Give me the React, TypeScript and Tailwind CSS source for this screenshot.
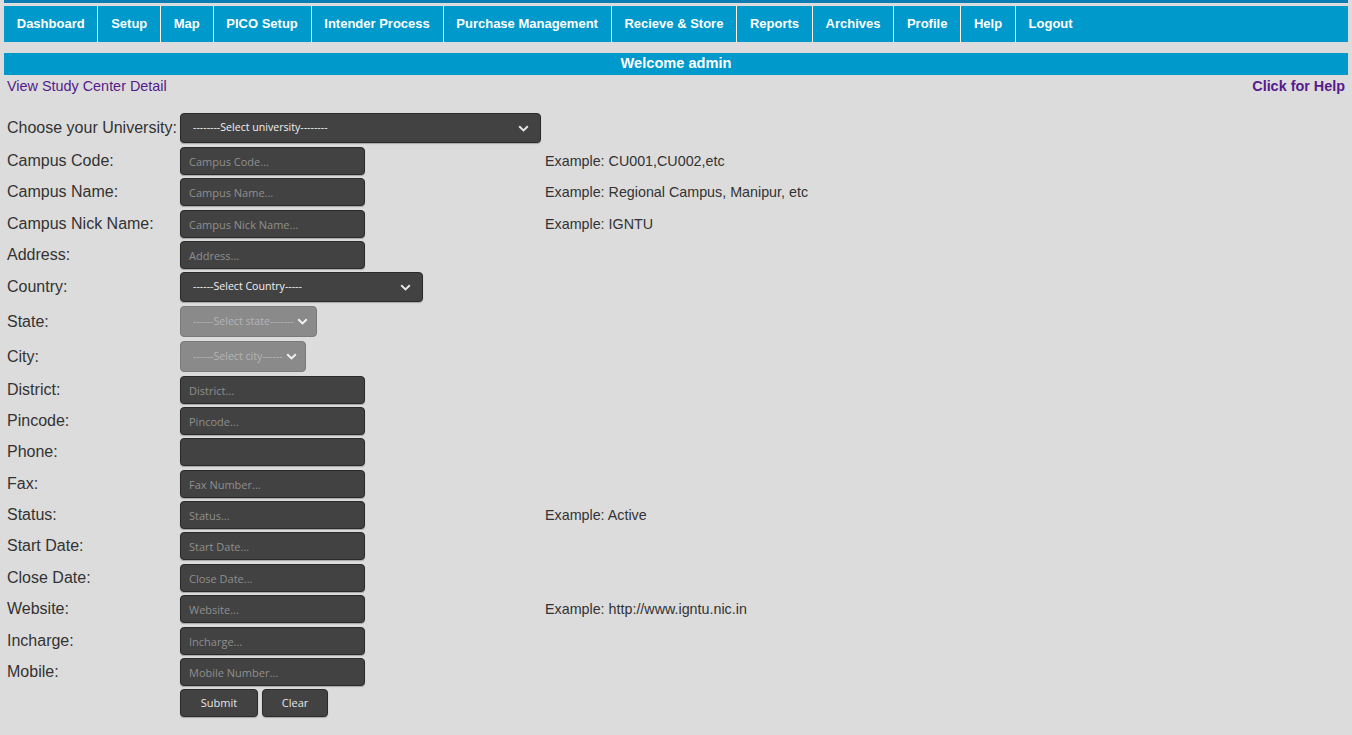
import type { ReactNode } from 'react';

const navItems = [
  'Dashboard',
  'Setup',
  'Map',
  'PICO Setup',
  'Intender Process',
  'Purchase Management',
  'Recieve & Store',
  'Reports',
  'Archives',
  'Profile',
  'Help',
  'Logout',
];

type Field =
  | { kind: 'input'; label: string; placeholder: string; mt: string; example?: string }
  | { kind: 'select'; label: string; text: string; mt: string; width: string; height: string; disabled?: boolean };

const fields: Field[] = [
  { kind: 'select', label: 'Choose your University:', text: '--------Select university--------', mt: 'mt-0', width: 'w-[361px]', height: 'h-[30px]' },
  { kind: 'input', label: 'Campus Code:', placeholder: 'Campus Code...', mt: 'mt-[4px]', example: 'Example: CU001,CU002,etc' },
  { kind: 'input', label: 'Campus Name:', placeholder: 'Campus Name...', mt: 'mt-[3px]', example: 'Example: Regional Campus, Manipur, etc' },
  { kind: 'input', label: 'Campus Nick Name:', placeholder: 'Campus Nick Name...', mt: 'mt-[4px]', example: 'Example: IGNTU' },
  { kind: 'input', label: 'Address:', placeholder: 'Address...', mt: 'mt-[3px]' },
  { kind: 'select', label: 'Country:', text: '------Select Country-----', mt: 'mt-[3px]', width: 'w-[243px]', height: 'h-[30px]' },
  { kind: 'select', label: 'State:', text: '------Select state-------', mt: 'mt-[4px]', width: 'w-[137px]', height: 'h-[31px]', disabled: true },
  { kind: 'select', label: 'City:', text: '------Select city------', mt: 'mt-[4px]', width: 'w-[126px]', height: 'h-[31px]', disabled: true },
  { kind: 'input', label: 'District:', placeholder: 'District...', mt: 'mt-[4px]' },
  { kind: 'input', label: 'Pincode:', placeholder: 'Pincode...', mt: 'mt-[3px]' },
  { kind: 'input', label: 'Phone:', placeholder: '', mt: 'mt-[3px]' },
  { kind: 'input', label: 'Fax:', placeholder: 'Fax Number...', mt: 'mt-[4px]' },
  { kind: 'input', label: 'Status:', placeholder: 'Status...', mt: 'mt-[3px]', example: 'Example: Active' },
  { kind: 'input', label: 'Start Date:', placeholder: 'Start Date...', mt: 'mt-[3px]' },
  { kind: 'input', label: 'Close Date:', placeholder: 'Close Date...', mt: 'mt-[4px]' },
  { kind: 'input', label: 'Website:', placeholder: 'Website...', mt: 'mt-[3px]', example: 'Example: http://www.igntu.nic.in' },
  { kind: 'input', label: 'Incharge:', placeholder: 'Incharge...', mt: 'mt-[4px]' },
  { kind: 'input', label: 'Mobile:', placeholder: 'Mobile Number...', mt: 'mt-[3px]' },
];

function Chevron({ disabled }: { disabled?: boolean }) {
  return (
    <svg width="11" height="7" viewBox="0 0 11 7" className={`shrink-0 ${disabled ? 'text-[#f2f2f2]' : 'text-[#e6e6e6]'}`}>
      <path d="M1.2 1.2 L5.5 5.4 L9.8 1.2" fill="none" stroke="currentColor" strokeWidth="2" />
    </svg>
  );
}

function Row({ label, mt, children, example }: { label: string; mt: string; children: ReactNode; example?: string }) {
  return (
    <div className={`flex items-center ${mt}`}>
      <div className="w-[176px] shrink-0 whitespace-nowrap pl-[3px] font-['Liberation_Sans',Arial,sans-serif] text-[16px] leading-[18px] text-[#333333]">
        {label}
      </div>
      <div className="flex w-[365px] shrink-0 font-['Open_Sans',sans-serif]">{children}</div>
      {example && (
        <div className="font-['Liberation_Sans',Arial,sans-serif] text-[14.3px] leading-[16px] text-[#333333]">{example}</div>
      )}
    </div>
  );
}

export default function App() {
  return (
    <div className="min-h-screen bg-[#dcdcdc] px-1 font-['Liberation_Sans',Arial,sans-serif]">
      <div className="h-[3px] bg-[#0b7db5]" />
      <nav className="mt-[3px] flex h-[36px] bg-[#0099cc]">
        {navItems.map((item, i) => (
          <div
            key={item}
            className={`flex items-center px-[12.75px] text-[13px] font-bold text-white ${
              i < navItems.length - 1 ? 'border-r border-white' : ''
            }`}
          >
            {item}
          </div>
        ))}
      </nav>

      <div className="mt-[11px] flex h-[22px] items-center justify-center bg-[#0099cc] text-[14.6px] font-bold text-white">
        Welcome admin
      </div>

      <div className="flex justify-between px-[3px] pt-[3px] text-[14.4px] leading-[16px]">
        <a className="text-[#551a8b]">View Study Center Detail</a>
        <a className="font-bold text-[#551a8b]">Click for Help</a>
      </div>

      <form className="mt-[19px] flex flex-col">
        {fields.map((f) =>
          f.kind === 'input' ? (
            <Row key={f.label} label={f.label} mt={f.mt} example={f.example}>
              <input
                placeholder={f.placeholder}
                className="h-[28px] w-[185px] rounded-[4px] border border-[#2a2a2a] bg-[#424242] px-[8px] text-[11px] text-[#eeeeee] shadow-[0_1px_1px_rgba(0,0,0,0.25)] outline-none placeholder:text-[#8f8f8f]"
              />
            </Row>
          ) : (
            <Row key={f.label} label={f.label} mt={f.mt}>
              <div
                className={`flex ${f.width} ${f.height} items-center justify-between gap-[3px] rounded-[4px] border pl-[12px] pr-[11px] text-[10.6px] ${
                  f.disabled
                    ? 'border-[#7a7a7a] bg-[#8a8a8a] text-[#b4b4b4]'
                    : 'border-[#2a2a2a] bg-[#424242] text-[#f0f0f0] shadow-[0_1px_1px_rgba(0,0,0,0.25)]'
                }`}
              >
                <span className="shrink-0 whitespace-nowrap">{f.text}</span>
                <Chevron disabled={f.disabled} />
              </div>
            </Row>
          )
        )}
        <div className="mt-[3px] flex pl-[176px] font-['Open_Sans',sans-serif]">
          <button
            type="button"
            className="h-[28px] w-[78px] rounded-[4px] border border-[#2a2a2a] bg-[#424242] text-[11px] text-[#e6e6e6] shadow-[0_1px_1px_rgba(0,0,0,0.25)]"
          >
            Submit
          </button>
          <button
            type="button"
            className="ml-[4px] h-[28px] w-[66px] rounded-[4px] border border-[#2a2a2a] bg-[#424242] text-[11px] text-[#e6e6e6] shadow-[0_1px_1px_rgba(0,0,0,0.25)]"
          >
            Clear
          </button>
        </div>
      </form>
    </div>
  );
}
